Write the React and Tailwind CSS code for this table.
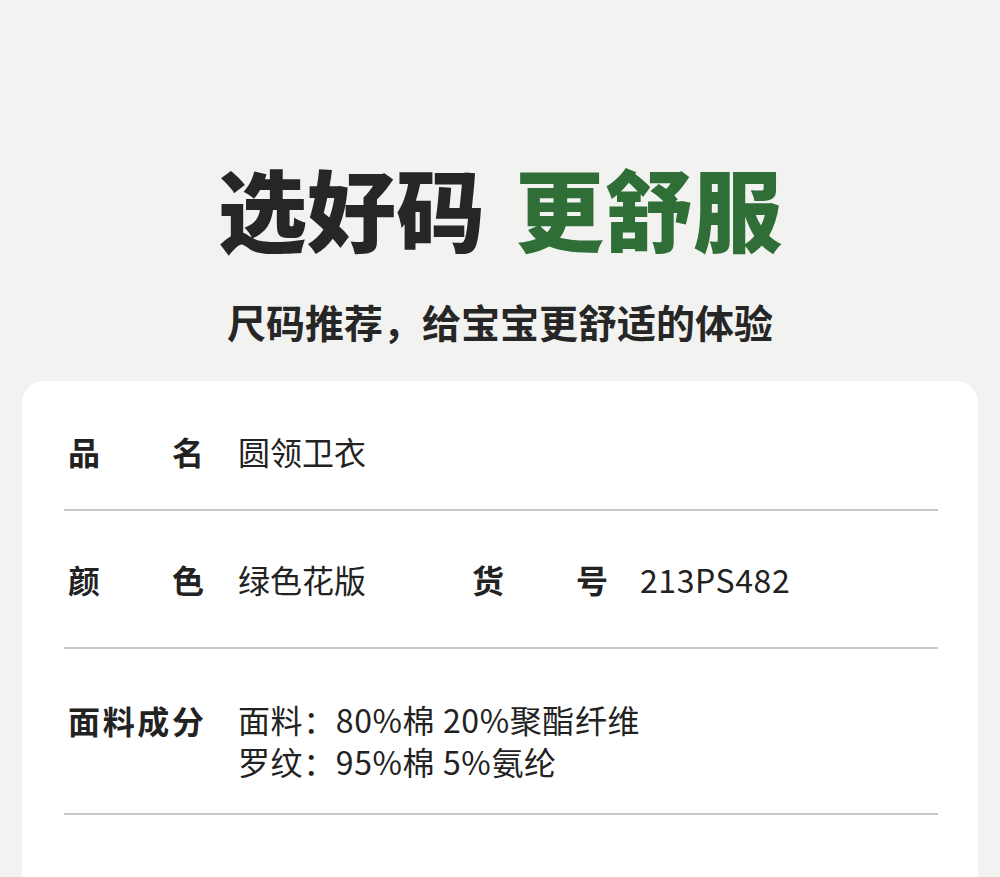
import React from 'react';

const font = { fontFamily: '"Noto Sans CJK SC", "Noto Sans", sans-serif' };

const Label = ({ text }) => (
    <div className="w-[136px] flex justify-between font-bold text-[32px] leading-[44px] text-[#222222] shrink-0">
        {text.split('').map((ch, i) => (
            <span key={i}>{ch}</span>
        ))}
    </div>
);

export default function App() {
    return (
        <div className="min-h-[877px] bg-[#f2f2f0] flex flex-col items-center overflow-hidden" style={font}>
            <h1 className="mt-[153px] flex gap-[30px] text-[89px] leading-[108px] font-black">
                <span className="text-[#262626]">选好码</span>
                <span className="text-[#2f6e37]">更舒服</span>
            </h1>
            <p className="mt-[35px] text-[39px] leading-[50px] font-bold text-[#262626]">尺码推荐，给宝宝更舒适的体验</p>

            <div className="mt-[35px] w-[956px] flex-1 bg-white rounded-t-[22px] pl-[42px] pr-[40px] pb-[60px]">
                <div className="border-b-2 border-[#c9c9c9] pt-[48px] pb-[36px] pl-1 flex items-center">
                    <Label text="品名" />
                    <span className="ml-[34px] text-[32px] leading-[44px] text-[#222222]">圆领卫衣</span>
                </div>

                <div className="border-b-2 border-[#c9c9c9] pt-[46px] pb-[46px] pl-1 flex items-center">
                    <Label text="颜色" />
                    <span className="ml-[34px] w-[234px] text-[32px] leading-[44px] text-[#222222]">绿色花版</span>
                    <Label text="货号" />
                    <span className="ml-[32px] text-[32px] leading-[44px] text-[#222222] tracking-[0.6px]">213PS482</span>
                </div>

                <div className="border-b-2 border-[#c9c9c9] pt-[49px] pb-[31px] pl-1 flex items-start">
                    <Label text="面料成分" />
                    <div className="ml-[34px] text-[32px] leading-[42px] text-[#222222] tracking-[0.6px]">
                        <div>面料：80%棉 20%聚酯纤维</div>
                        <div>罗纹：95%棉 5%氨纶</div>
                    </div>
                </div>
            </div>
        </div>
    );
}
